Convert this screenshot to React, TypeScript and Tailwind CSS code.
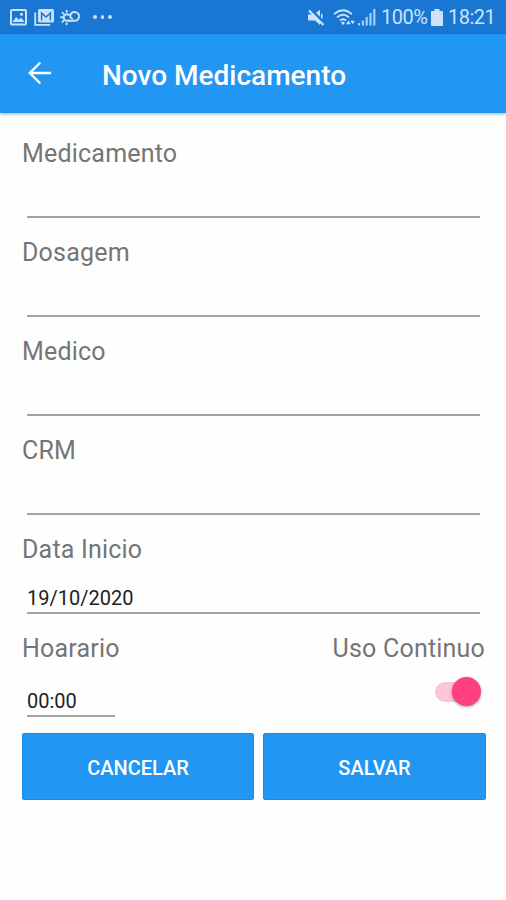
import React from 'react'

const fields = [
  { label: "Medicamento", value: "" },
  { label: "Dosagem", value: "" },
  { label: "Medico", value: "" },
  { label: "CRM", value: "" },
  { label: "Data Inicio", value: "19/10/2020" },
]

function StatusBar() {
  return (
    <div className="flex h-[34px] items-center bg-[#1976d2] pl-[10px] pr-[11px] text-[#cbe3f9]">
      <svg width="17" height="17" viewBox="0 0 17 17" fill="none">
        <rect x="1" y="1" width="15" height="14.500" rx="1" stroke="currentColor" strokeWidth="2" />
        <path d="M2.500 13 6.200 8l2.500 2.800 2.300-2.200 3.500 4.400z" fill="currentColor" />
        <circle cx="11.500" cy="5.200" r="1.500" fill="currentColor" />
      </svg>
      <svg className="ml-[7px]" width="21" height="18" viewBox="0 0 21 18" fill="none">
        <path d="M1.200 4.500v12.300h15" stroke="currentColor" strokeWidth="1.800" />
        <rect x="4" y="1" width="16" height="13.500" rx="1.500" fill="currentColor" />
        <path d="M7.600 12.500V5l4.400 4 4.400-4v7.500" stroke="#1976d2" strokeWidth="1.500" />
      </svg>
      <svg className="ml-[5px]" width="20" height="17" viewBox="0 0 20 17" fill="none" stroke="currentColor" strokeWidth="1.900" strokeLinecap="round">
        <path d="M9.600 11.800H7A3.300 3.300 0 1 1 9.400 6.300" />
        <path d="M8.800 11.800h5.800a4.400 4.400 0 1 0-4.200-5.700c-.3 1.700.3 3.100 1.800 3.500" />
        <path d="M6.700 1.600v1.200M2.600 3.800l.8.8M.9 8.200h1.200M2.500 12.900l.9-.9M6.600 15.400v-1.100" />
      </svg>
      <div className="ml-[13px] flex gap-1">
        <span className="size-[3.500px] rounded-full bg-current"></span>
        <span className="size-[3.500px] rounded-full bg-current"></span>
        <span className="size-[3.500px] rounded-full bg-current"></span>
      </div>

      <div className="ml-auto flex items-center">
        <svg width="17" height="17" viewBox="0 0 17 17" fill="none">
          <path d="M0 5.500h4.500L12 12.800V16L7 11.500H0zM8 3.800 12 .8v7z" fill="currentColor" />
          <path d="M13.800 5v4.500" stroke="currentColor" strokeWidth="1.500" />
          <path d="M1 1.500l14.500 14.500" stroke="currentColor" strokeWidth="2.200" />
        </svg>
        <svg className="ml-2" width="23" height="17" viewBox="0 0 23 17" fill="none" stroke="currentColor" strokeWidth="1.800">
          <path d="M1 5.200Q10 -2.800 19 5.200M4 8.400q6-5.200 12 0M6.900 11.500q3.100-2.600 6.200 0" />
          <path d="M8 13.600q2-1.600 4 0l-2 2.600z" fill="currentColor" stroke="none" />
          <path d="M13 15.200l2.400-3.800 2.400 3.800zM17.400 11.800h4.400l-2.200 3.400z" fill="currentColor" stroke="none" />
        </svg>
        <svg className="ml-[2px]" width="18" height="18" viewBox="0 0 18 18" fill="currentColor">
          <path d="M0 15h2v2.500H0zM3.800 12.500h2.200v5H3.800zM7.600 9h2.200v8.500H7.600zM11.400 5h2.200v12.500h-2.200zM15.200 1h2.200v16.500h-2.200z" opacity=".8" />
        </svg>
        <span className="ml-[5px] w-[45px] whitespace-nowrap text-[20px] leading-[36px] tracking-[-0.5px]">100%</span>
        <svg className="ml-[5px]" width="12" height="17" viewBox="0 0 12 17" fill="currentColor">
          <path d="M3.500 0h5v2H11a1 1 0 0 1 1 1v13a1 1 0 0 1-1 1H1a1 1 0 0 1-1-1V3a1 1 0 0 1 1-1h2.500z" />
        </svg>
        <span className="ml-[5px] w-[47px] whitespace-nowrap text-[20px] leading-[36px] tracking-[-0.5px]">18:21</span>
      </div>
    </div>
  )
}

function App() {
  return (
    <div className="h-[900px] w-[506px] overflow-hidden bg-[#fefefe] font-['Roboto',sans-serif]">
      <StatusBar />
      <header className="flex h-[79px] items-center bg-[#2196f3] pl-7 text-white shadow-[0_1px_3px_rgba(0,0,0,0.35)]">
        <svg className="mb-[2px]" width="24" height="24" viewBox="0 0 24 24" fill="none" stroke="currentColor" strokeWidth="2.400">
          <path d="M23 12H2M12.300 1.500 1.800 12l10.500 10.500" />
        </svg>
        <h1 className="ml-[50px] mt-[5px] text-[28px] font-medium leading-8">Novo Medicamento</h1>
      </header>

      <main className="pl-[22px] pr-5 pt-6">
        {fields.map((field) => (
          <div key={field.label} className="h-[99px]">
            <p className="h-[30px] text-[25px] leading-[34px] tracking-[0.2px] text-[#757575]">{field.label}</p>
            <div className="ml-[5px] mr-[6px] flex h-[51px] items-end border-b-2 border-[#a3a3a3] text-[20px] leading-[28px] text-[#212121]">{field.value}</div>
          </div>
        ))}

        <div className="flex h-[101px] justify-between">
          <div>
            <p className="h-[30px] text-[25px] leading-[34px] tracking-[0.2px] text-[#757575]">Hoarario</p>
            <div className="ml-[5px] flex h-[55px] w-[88px] items-end border-b-2 border-[#a3a3a3] text-[20px] leading-[28px] text-[#212121]">00:00</div>
          </div>
          <div className="flex flex-col items-end">
            <p className="mr-px h-[30px] text-[25px] leading-[34px] tracking-[0.2px] text-[#757575]">Uso Continuo</p>
            <div className="mr-[5px] mt-[15px] flex h-[29px] w-[46px] items-center">
              <span className="h-5 w-9 rounded-full bg-[#fdc3d8]"></span>
              <span className="-ml-[19px] size-[29px] shrink-0 rounded-full bg-[#ff4081] shadow-[0_1px_3px_rgba(0,0,0,0.35)]"></span>
            </div>
          </div>
        </div>

        <div className="flex gap-[9px] text-[20px] font-medium text-white">
          <button className="h-[67px] w-[232px] rounded-[2px] border border-[#168ce8] bg-[#2196f3] pt-[2px]">CANCELAR</button>
          <button className="h-[67px] w-[223px] rounded-[2px] border border-[#168ce8] bg-[#2196f3] pt-[2px]">SALVAR</button>
        </div>
      </main>
    </div>
  )
}

export default App
